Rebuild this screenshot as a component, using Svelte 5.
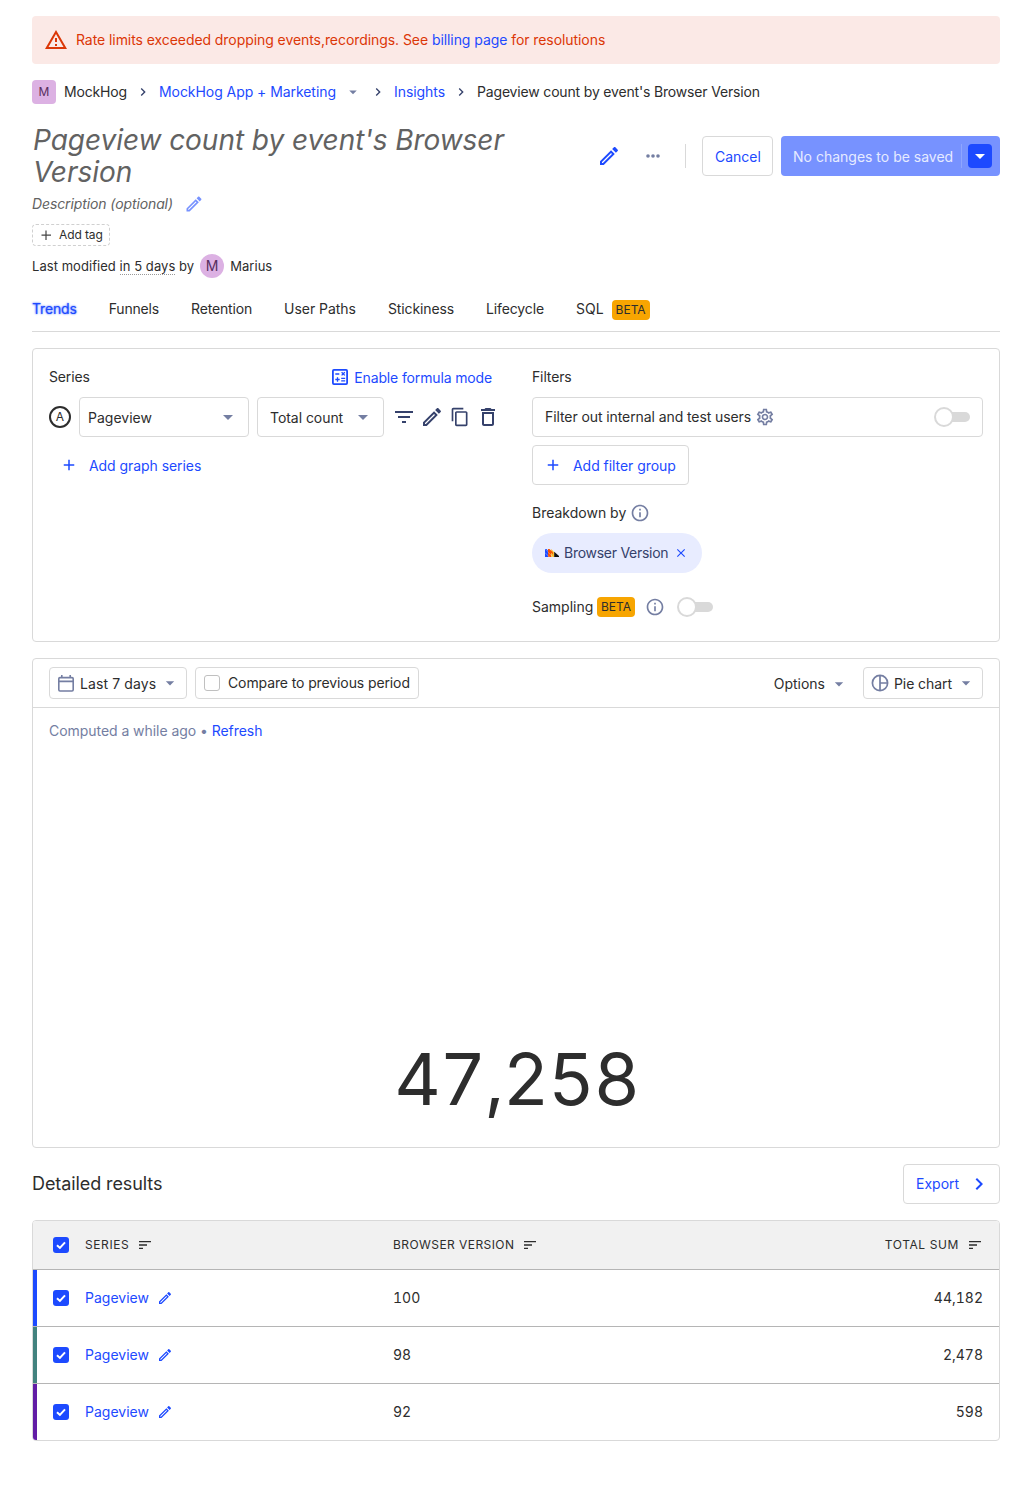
<script>
  const tabs = ['Funnels', 'Retention', 'User Paths', 'Stickiness', 'Lifecycle'];
  const rows = [
    { version: '100', total: '44,182', tone: 'blue' },
    { version: '98', total: '2,478', tone: 'teal' },
    { version: '92', total: '598', tone: 'purple' },
  ];
  const paths = {
    warning: 'M12 5.99L19.53 19H4.47L12 5.99M12 2L1 21h22L12 2zm1 14h-2v2h2v-2zm0-6h-2v4h2v-4z',
    edit: 'M14.06 9.02l.92.92L5.92 19H5v-.92l9.06-9.06M17.66 3c-.25 0-.51.1-.7.29l-1.83 1.83 3.75 3.75 1.83-1.83c.39-.39.39-1.02 0-1.41l-2.34-2.34c-.2-.2-.45-.29-.71-.29zm-3.6 3.19L3 17.25V21h3.75L17.81 9.94l-3.75-3.75z',
    filter: 'M10 18h4v-2h-4v2zM3 6v2h18V6H3zm3 7h12v-2H6v2z',
    copy: 'M16 1H4c-1.1 0-2 .9-2 2v14h2V3h12V1zm3 4H8c-1.1 0-2 .9-2 2v14c0 1.1.9 2 2 2h11c1.1 0 2-.9 2-2V7c0-1.1-.9-2-2-2zm0 16H8V7h11v14z',
    trash: 'M16 9v10H8V9h8m-1.5-6h-5l-1 1H5v2h14V4h-3.5l-1-1zM18 7H6v12c0 1.1.9 2 2 2h8c1.1 0 2-.9 2-2V7z',
    caret: 'M7 10l5 5 5-5z',
    chevron: 'M8.59 16.59L13.17 12 8.59 7.41 10 6l6 6-6 6z',
    info: 'M11 7h2v2h-2zm0 4h2v6h-2zm1-9C6.48 2 2 6.48 2 12s4.48 10 10 10 10-4.48 10-10S17.52 2 12 2zm0 18c-4.41 0-8-3.59-8-8s3.59-8 8-8 8 3.59 8 8-3.59 8-8 8z',
    plus: 'M19 13h-6v6h-2v-6H5v-2h6V5h2v6h6v2z',
    close: 'M19 6.41L17.59 5 12 10.59 6.41 5 5 6.41 10.59 12 5 17.59 6.41 19 12 13.41 17.59 19 19 17.59 13.41 12z',
    gear: 'M19.43 12.98c.04-.32.07-.64.07-.98 0-.34-.03-.66-.07-.98l2.11-1.65c.19-.15.24-.42.12-.64l-2-3.46c-.09-.16-.26-.25-.44-.25-.06 0-.12.01-.17.03l-2.49 1c-.52-.4-1.08-.73-1.69-.98l-.38-2.65C14.46 2.18 14.25 2 14 2h-4c-.25 0-.46.18-.49.42l-.38 2.65c-.61.25-1.17.59-1.69.98l-2.49-1c-.06-.02-.12-.03-.18-.03-.17 0-.34.09-.43.25l-2 3.46c-.13.22-.07.49.12.64l2.11 1.65c-.04.32-.07.65-.07.98 0 .33.03.66.07.98l-2.11 1.65c-.19.15-.24.42-.12.64l2 3.46c.09.16.26.25.44.25.06 0 .12-.01.17-.03l2.49-1c.52.4 1.08.73 1.69.98l.38 2.65c.03.24.24.42.49.42h4c.25 0 .46-.18.49-.42l.38-2.65c.61-.25 1.17-.59 1.69-.98l2.49 1c.06.02.12.03.18.03.17 0 .34-.09.43-.25l2-3.46c.12-.22.07-.49-.12-.64l-2.11-1.65zm-1.98-1.71c.04.31.05.52.05.73 0 .21-.02.43-.05.73l-.14 1.13.89.7 1.08.84-.7 1.21-1.27-.51-1.04-.42-.9.68c-.43.32-.84.56-1.25.73l-1.06.43-.16 1.13-.2 1.35h-1.4l-.19-1.35-.16-1.13-1.06-.43c-.43-.18-.83-.41-1.23-.71l-.91-.7-1.06.43-1.27.51-.7-1.21 1.08-.84.89-.7-.14-1.13c-.03-.31-.05-.54-.05-.74s.02-.43.05-.73l.14-1.13-.89-.7-1.08-.84.7-1.21 1.27.51 1.04.42.9-.68c.43-.32.84-.56 1.25-.73l1.06-.43.16-1.13.2-1.35h1.39l.19 1.35.16 1.13 1.06.43c.43.18.83.41 1.23.71l.91.7 1.06-.43 1.27-.51.7 1.21-1.07.85-.89.7.14 1.13zM12 8c-2.21 0-4 1.79-4 4s1.79 4 4 4 4-1.79 4-4-1.79-4-4-4zm0 6c-1.1 0-2-.9-2-2s.9-2 2-2 2 .9 2 2-.9 2-2 2z',
    sort: 'M3 18h6v-2H3v2zM3 6v2h18V6H3zm0 7h12v-2H3v2z',
  };
</script>

{#snippet icon(name, size)}
  <svg class="icon" width={size} height={size} viewBox="0 0 24 24"><path d={paths[name]} /></svg>
{/snippet}

{#snippet checkbox()}
  <span class="check on"><svg width="16" height="16" viewBox="0 0 16 16"><path d="M4 8.2 6.9 10.9 12 5.3" fill="none" stroke="#fff" stroke-width="2" /></svg></span>
{/snippet}

<main>
  <div class="banner">
    {@render icon('warning', 24)}
    <span>Rate limits exceeded dropping events,recordings. See <a>billing page</a> for resolutions</span>
  </div>

  <nav class="crumbs">
    <span class="lettermark">M</span>
    <span class="c1">MockHog</span>
    <span class="sep">{@render icon('chevron', 16)}</span>
    <a class="c2">MockHog App + Marketing</a>
    <span class="drop">{@render icon('caret', 18)}</span>
    <span class="sep">{@render icon('chevron', 16)}</span>
    <a class="c3">Insights</a>
    <span class="sep">{@render icon('chevron', 16)}</span>
    <span class="c4">Pageview count by event's Browser Version</span>
  </nav>

  <header>
    <h1>Pageview count by event's Browser Version</h1>
    <div class="actions">
      <span class="act-edit">{@render icon('edit', 24)}</span>
      <svg class="dots" width="16" height="16" viewBox="0 0 16 16"><circle cx="3" cy="8" r="1.8" /><circle cx="8" cy="8" r="1.8" /><circle cx="13" cy="8" r="1.8" /></svg>
      <i class="rule"></i>
      <button class="btn cancel">Cancel</button>
      <div class="save"><span>No changes to be saved</span><i></i><b>{@render icon('caret', 24)}</b></div>
    </div>
  </header>
  <div class="desc"><em>Description (optional)</em>{@render icon('edit', 20)}</div>
  <div class="tag">
    <svg width="16" height="16" viewBox="0 0 16 16"><path d="M8 3.5v9.5M3.5 8.2h9.5" stroke="#444" stroke-width="1.2" /></svg>
    <span>Add tag</span>
  </div>
  <div class="modified">
    <span>Last modified <u>in 5 days</u> by</span><span class="avatar">M</span><span>Marius</span>
  </div>

  <div class="tabs">
    <span class="active">Trends</span>
    {#each tabs as tab}<span>{tab}</span>{/each}
    <span class="sql">SQL <span class="beta">BETA</span></span>
  </div>

  <section class="card query">
    <div class="series">
      <div class="head">
        <span>Series</span>
        <a class="formula">
          <svg width="16" height="16" viewBox="0 0 16 16" fill="none" stroke="currentColor"><rect x=".9" y=".9" width="14.2" height="14.2" rx="1" stroke-width="1.8" /><path d="M3.3 5h4M3.3 10.5h4.4M5.5 8.3v4.4M9.2 9.3h4M9.2 11.9h4M9.6 3.2l3.2 3.2M12.8 3.2 9.6 6.4" stroke-width="1.3" /></svg>
          <span>Enable formula mode</span>
        </a>
      </div>
      <div class="series-row">
        <span class="letter">A</span>
        <div class="select event"><span>Pageview</span>{@render icon('caret', 24)}</div>
        <div class="select math"><span>Total count</span>{@render icon('caret', 24)}</div>
        <div class="tools">
          <span>{@render icon('filter', 24)}</span>
          <span>{@render icon('edit', 24)}</span>
          <span>{@render icon('copy', 20)}</span>
          <span>{@render icon('trash', 24)}</span>
        </div>
      </div>
      <a class="add">{@render icon('plus', 18)}<span>Add graph series</span></a>
    </div>
    <div class="filters">
      <div class="head"><span>Filters</span></div>
      <div class="internal"><span>Filter out internal and test users</span>{@render icon('gear', 20)}<span class="toggle"></span></div>
      <button class="btn group">{@render icon('plus', 18)}<span>Add filter group</span></button>
      <div class="breakdown"><span>Breakdown by</span>{@render icon('info', 20)}</div>
      <div class="pill">
        <svg width="14" height="8" viewBox="0 0 14 8">
          <path d="M0 0 3 3V8H0z" fill="#1d4aff" />
          <path d="M3 0 6.2 3.2V8H3z" fill="#f54e00" />
          <path d="M6.2 0 9.2 3.2V8H6.2z" fill="#f9bd2b" />
          <path d="M0 0h1.5L3 1.5V3z" fill="#1d4aff" />
          <path d="M3 0h1.5l3.5 3.5v2L3 .8z" fill="#f54e00" />
          <path d="M0 3.6 4.4 8M3 3.2 7.8 8" stroke="#e8ecff" stroke-width=".4" />
          <path d="M9.2 2.8 14 7v1H9.2z" fill="#111" />
        </svg>
        <span>Browser Version</span>{@render icon('close', 14)}
      </div>
      <div class="sampling"><span>Sampling</span><span class="beta">BETA</span>{@render icon('info', 20)}<span class="toggle"></span></div>
    </div>
  </section>

  <section class="card result">
    <div class="toolbar">
      <div class="tool date">
        <svg width="16" height="17" viewBox="0 0 16 17" fill="none" stroke="currentColor" stroke-width="1.6"><rect x=".8" y="2.6" width="14.4" height="13.4" rx="1.2" /><path d="M.8 6.4h14.4M3.8 0v2.6M12.2 0v2.6" /></svg>
        <span>Last 7 days</span>{@render icon('caret', 20)}
      </div>
      <div class="tool compare"><span class="check"></span><span>Compare to previous period</span></div>
      <div class="options"><span>Options</span>{@render icon('caret', 20)}</div>
      <div class="tool chart">
        <svg width="18" height="18" viewBox="0 0 18 18" fill="none" stroke="currentColor" stroke-width="1.7"><circle cx="9" cy="9" r="7.6" /><path d="M9 1.4v15.2M9 9h7.6" /></svg>
        <span>Pie chart</span>{@render icon('caret', 20)}
      </div>
    </div>
    <div class="computed">Computed a while ago • <a>Refresh</a></div>
    <div class="total"><span>47,258</span></div>
  </section>

  <div class="details">
    <h2>Detailed results</h2>
    <button class="btn export"><span>Export</span>{@render icon('chevron', 24)}</button>
  </div>

  <div class="table">
    <div class="tr th">
      <div class="td first">{@render checkbox()}<span>SERIES</span>{@render icon('sort', 16)}</div>
      <div class="td"><span class="version">BROWSER VERSION</span>{@render icon('sort', 16)}</div>
      <div class="td end"><span>TOTAL SUM</span>{@render icon('sort', 16)}</div>
    </div>
    {#each rows as row}
      <div class="tr row {row.tone}">
        <div class="td first">{@render checkbox()}<a>Pageview</a>{@render icon('edit', 16)}</div>
        <div class="td num">{row.version}</div>
        <div class="td end num">{row.total}</div>
      </div>
    {/each}
  </div>
</main>

<style>
  :global(body) { background: #fff; }
  * { box-sizing: border-box; }
  main {
    height: 1505px;
    padding: 16px 32px 0;
    font-family: Inter, sans-serif;
    font-size: 14px;
    font-weight: 400;
    line-height: 20px;
    color: #2d2d2d;
    white-space: nowrap;
  }
  a { color: #1d4aff; }
  svg { flex: none; display: block; }
  .icon { fill: currentColor; }
  button { font: inherit; letter-spacing: inherit; }
  .btn { display: flex; align-items: center; height: 40px; border: 1px solid #d9d9d9; border-radius: 4px; background: #fff; color: #1d4aff; padding: 1px 12px 0; }
  .banner { display: flex; align-items: center; gap: 8px; height: 48px; padding: 0 12px; border-radius: 4px; background: #fbe9e6; color: #db3707; letter-spacing: -.068px; }

  .crumbs { display: flex; align-items: center; height: 24px; margin-top: 16px; }
  .lettermark { width: 24px; height: 24px; margin-right: 8px; border-radius: 4px; background: #dcb1e3; color: #572e5e; font-size: 12px; line-height: 24px; text-align: center; }
  .sep { display: flex; justify-content: center; width: 32px; color: #35416b; }
  .drop { width: 26px; padding-left: 8px; color: #747ea2; }
  .c1 { letter-spacing: -.16px; }
  .c2, .c3 { letter-spacing: -.06px; }
  .c4 { letter-spacing: -.17px; }

  header { display: flex; height: 64px; margin-top: 20px; }
  h1 { width: 500px; margin: 0; padding-left: 1px; font-size: 28px; line-height: 32px; font-weight: 400; font-style: italic; letter-spacing: -.05px; color: #626262; white-space: normal; }
  .actions { display: flex; align-items: center; margin-left: auto; height: 64px; }
  .act-edit { color: #1d4aff; margin-right: 24px; }
  .dots { fill: #747ea2; margin-right: 24px; }
  .rule { width: 1px; height: 24px; margin-right: 16px; background: #d9d9d9; }
  .cancel { width: 71px; margin-right: 8px; }
  .save { display: flex; align-items: center; width: 219px; height: 40px; padding: 0 8px 0 12px; border-radius: 4px; background: #7792ff; color: #e6ebff; }
  .save span { padding-top: 1px; }
  .save i { width: 1px; height: 24px; margin: 0 6px 0 auto; background: #8ea5ff; }
  .save b { width: 24px; height: 24px; border-radius: 4px; background: #1d4aff; color: #fff; }

  .desc { display: flex; align-items: center; gap: 11px; height: 24px; margin-top: 4px; color: #7792ff; }
  .desc em { color: #626262; letter-spacing: -.11px; }
  .tag { display: flex; align-items: center; gap: 5px; width: 78px; height: 22px; margin-top: 8px; padding: 0 5px; border: 1px dashed #d0d0d0; border-radius: 4px; font-size: 12px; letter-spacing: -.1px; }
  .modified { display: flex; align-items: center; gap: 6px; height: 24px; margin-top: 8px; font-size: 13px; letter-spacing: .05px; }
  .modified u { text-decoration: none; border-bottom: 1px dotted #999; }
  .avatar { width: 24px; height: 24px; border-radius: 50%; background: #dcb1e3; color: #572e5e; font-size: 14px; line-height: 24px; text-align: center; }

  .tabs { display: flex; gap: 32px; height: 44px; margin-top: 10px; padding-top: 11px; border-bottom: 1px solid #d9d9d9; }
  .tabs > span:nth-child(-n+3) { letter-spacing: -.17px; }
  .tabs > span:nth-child(4) { letter-spacing: -.03px; }
  .tabs > span:nth-child(5), .tabs > span:nth-child(6) { letter-spacing: -.12px; }
  .tabs > .active { color: #1d4aff; text-shadow: 0 0 2px #1d4aff; letter-spacing: -.12px; }
  .sql { display: flex; gap: 8px; }
  .beta { width: 38px; text-align: center; height: 20px; border-radius: 4px; background: #f7a501; color: #2d2d2d; font-size: 12px; line-height: 20px; }
  .sql .beta { margin-top: 1px; }

  .card { border: 1px solid #d9d9d9; border-radius: 4px; }
  .query { display: grid; grid-template-columns: 451px 451px; gap: 32px; height: 294px; margin-top: 16px; padding: 16px; }
  .head { display: flex; justify-content: space-between; align-items: center; height: 24px; letter-spacing: -.14px; }
  .formula { display: flex; align-items: center; gap: 6px; margin-right: 8px; }
  .formula span { padding-top: 2px; }
  .series-row { display: flex; align-items: center; gap: 8px; margin-top: 8px; }
  .letter { flex: none; width: 22px; height: 22px; border: 2px solid #2d2d2d; border-radius: 50%; font-size: 12px; line-height: 18px; text-align: center; }
  .select { display: flex; flex: none; align-items: center; justify-content: space-between; height: 40px; border: 1px solid #d9d9d9; border-radius: 4px; color: #747ea2; }
  .select span { color: #2d2d2d; padding-top: 2px; }
  .event { width: 170px; padding: 0 8px; }
  .math { width: 127px; padding: 0 8px 0 12px; letter-spacing: -.05px; }
  .tools { display: flex; flex: none; width: 112px; color: #35416b; margin-left: -2px; }
  .tools span { display: flex; align-items: center; justify-content: center; width: 28px; height: 24px; }
  .add { display: flex; align-items: center; gap: 11px; height: 40px; margin-top: 8px; padding-left: 11px; letter-spacing: -.06px; }
  .add span { padding-top: 2px; }
  .internal { display: flex; align-items: center; gap: 4px; height: 40px; margin-top: 8px; padding: 0 12px; border: 1px solid #d9d9d9; border-radius: 4px; letter-spacing: -.09px; }
  .internal .icon, .breakdown .icon, .sampling .icon { color: #747ea2; }
  .internal .toggle { margin-left: auto; }
  .toggle { display: flex; align-items: center; width: 36px; height: 20px; background: linear-gradient(#d9d9d9, #d9d9d9) 10px 5px / 18px 10px no-repeat; }
  .toggle::before { content: ''; box-sizing: border-box; flex: none; width: 20px; height: 20px; border: 2px solid #d9d9d9; border-radius: 50%; background: #fff; }
  .toggle::after { content: ''; width: 16px; height: 10px; border-radius: 0 5px 5px 0; background: #d9d9d9; }
  .group { width: 157px; gap: 11px; margin-top: 8px; padding: 0 0 0 11px; letter-spacing: -.05px; }
  .group span { padding-top: 1px; }
  .breakdown { display: flex; align-items: center; gap: 4px; height: 24px; margin-top: 16px; }
  .pill { display: flex; align-items: center; width: 170px; height: 40px; margin-top: 8px; padding-left: 13px; border-radius: 20px; background: #e8ecff; color: #35416b; letter-spacing: -.27px; }
  .pill span { margin: 0 6px 0 5px; }
  .pill .icon { color: #1d4aff; }
  .sampling { display: flex; align-items: center; height: 24px; margin-top: 22px; }
  .sampling span:first-child { width: 61px; }
  .sampling .beta { margin: 0 10px 0 4px; }
  .sampling .toggle { margin-left: 12px; }

  .result { height: 490px; margin-top: 16px; }
  .toolbar { display: flex; align-items: center; gap: 8px; height: 49px; padding: 0 16px; border-bottom: 1px solid #d9d9d9; color: #747ea2; }
  .toolbar span { color: #2d2d2d; }
  .tool { display: flex; align-items: center; height: 32px; border: 1px solid #d9d9d9; border-radius: 4px; }
  .date { width: 138px; padding-left: 8px; letter-spacing: .1px; }
  .date span, .chart span { padding-top: 2px; margin: 0 4px 0 6px; }
  .chart span { margin-left: 5px; letter-spacing: -.08px; }
  .compare { gap: 8px; width: 224px; padding-left: 8px; letter-spacing: -.11px; }
  .options { display: flex; align-items: center; gap: 4px; margin: 2px 6px 0 auto; }
  .chart { width: 120px; padding-left: 7px; }
  .check { width: 16px; height: 16px; border: 1px solid #c0c0c0; border-radius: 3px; flex: none; }
  .on { border: 0; background: #1d4aff; }
  .computed { padding: 13px 16px 0; color: #747ea2; letter-spacing: -.05px; }
  .total { display: flex; justify-content: center; margin-top: 292px; padding-left: 1px; font-size: 72px; line-height: 92px; letter-spacing: -1.4px; font-variant-numeric: tabular-nums; }

  .details { display: flex; align-items: center; justify-content: space-between; height: 40px; margin-top: 16px; }
  h2 { margin: 0; font-size: 18px; line-height: 28px; font-weight: 400; letter-spacing: -.09px; }
  .export { width: 97px; padding: 0 8px 0 12px; justify-content: space-between; }

  .table { margin-top: 16px; border: 1px solid #d9d9d9; border-radius: 4px; overflow: hidden; }
  .tr { display: grid; grid-template-columns: 360px 1fr 200px; height: 57px; border-top: 1px solid #b5b5b5; }
  .th { height: 48px; border: 0; background: #f1f1f1; font-size: 12px; letter-spacing: .6px; }
  .th .version { letter-spacing: .43px; }
  .td { display: flex; align-items: center; }
  .th .icon { margin-left: 8px; }
  .first { padding-left: 20px; }
  .row .first { padding-left: 16px; border-left: 4px solid; }
  .first .check { margin-right: 16px; }
  .first a + .icon { margin-left: 8px; }
  .end { justify-content: flex-end; padding-right: 16px; }
  .num { font-variant-numeric: tabular-nums; }
  .row .icon { color: #1d4aff; }
  .blue .first { border-color: #1d4aff; }
  .teal .first { border-color: #42827e; }
  .purple .first { border-color: #621da6; }
</style>
